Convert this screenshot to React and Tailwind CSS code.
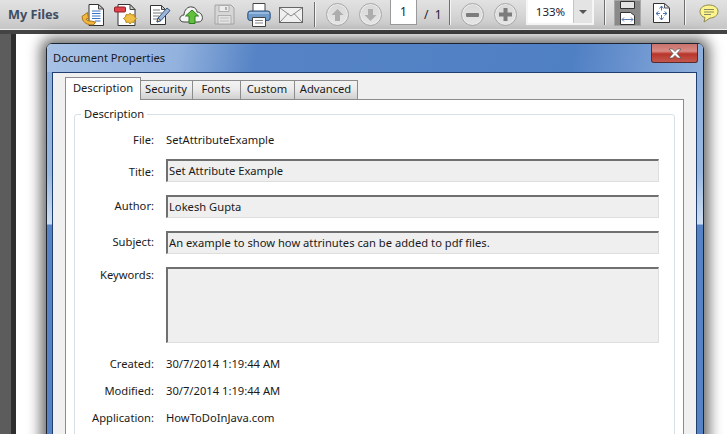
const font = { fontFamily: '"Noto Sans", "Open Sans", sans-serif' };

const Separator = ({ className = "" }) => (
  <div className={`h-[25px] w-px bg-[#6f6f6f] shadow-[1px_0_0_#f4f4f4] ${className}`} />
);

const OpenIcon = () => (
  <svg width="24" height="24" viewBox="0 0 24 24">
    <path d="M8 1.500h9.500l5 4.500v16.500H8z" fill="#fff" stroke="#333" />
    <path d="M17.500 1.500V6h5z" fill="#ccc" stroke="#444" />
    <path d="M11 8h8.500M11 10.500h8.500M11 13h8.500M11 15.500h8.500M14 18h5.500" stroke="#3a74c4" strokeWidth="1.200" />
    <path d="M6.500 9.500 1 13.500 1.800 17c2 4 7.200 5.500 11.200 4.500l1.500-2.500-4.500-1c-2.500.3-4.500-.5-5-2l2.500-.5z" fill="#f4b63c" stroke="#a8741c" />
  </svg>
);

const NewIcon = () => (
  <svg width="24" height="24" viewBox="0 0 24 24">
    <path d="M4 1.500h12l5 5v16H4z" fill="#fff" stroke="#333" />
    <path d="M16 1.500v5h5z" fill="#ccc" stroke="#444" />
    <rect x="0.500" y="4" width="11" height="5" rx="1" fill="#e0424c" stroke="#8f2028" />
    <path d="m16 10 1.500 2 2.500-.5.500 2.500 2 1.500-2 1.500-.5 2.500-2.500-.5-1.500 2-1.500-2-2.500.5-.5-2.500-2-1.500 2-1.500.5-2.500 2.500.5z" fill="#f2bf45" stroke="#b98a1e" />
  </svg>
);

const EditIcon = () => (
  <svg width="22" height="22" viewBox="0 0 22 22">
    <path d="M1.500 1.500h11l4 4v15h-15z" fill="#fff" stroke="#333" />
    <path d="M12.500 1.500v4h4z" fill="#ccc" stroke="#444" />
    <path d="M4 6h7M4 9h9M4 12h6M4 15h4" stroke="#777" />
    <path d="m8 18 1-4 9-10 3 2.500-9 10z" fill="#9db6d8" stroke="#34507a" />
    <path d="m8 18 1-4 3 2.500z" fill="#f0d9a8" stroke="#34507a" />
  </svg>
);

const UploadIcon = () => (
  <svg width="25" height="22" viewBox="0 0 25 22">
    <path d="M5 18c-6 0-5-7 0-7 0-5 4-9 8-8 3 0 5 3 5 5 6 0 8 10 1 10z" fill="#f4f4f4" stroke="#444" />
    <path d="m13 6 6.500 6H16v7.500h-6V12H6.500z" fill="#62c13c" stroke="#2e7d1f" />
  </svg>
);

const SaveIcon = () => (
  <svg width="21" height="21" viewBox="0 0 21 21">
    <path d="M1 1h16l3 3v16H1z" fill="#d6d6d6" stroke="#a4a4a4" />
    <path d="M5 1.500h10v6H5z" fill="#ececec" stroke="#adadad" />
    <path d="M11 3h2v3h-2z" fill="#adadad" />
    <path d="M4 11.500h13V20H4z" fill="#e4e4e4" stroke="#adadad" />
    <path d="M6 14h9M6 17h9" stroke="#bbb" />
  </svg>
);

const PrintIcon = () => (
  <svg width="24" height="24" viewBox="0 0 24 24">
    <path d="M6 .5h12v9H6z" fill="#fff" stroke="#444" />
    <rect x="0.800" y="8" width="22.400" height="9.500" rx="2.500" fill="#6f9ccb" stroke="#2c4f78" />
    <path d="M2 10h20" stroke="#c0d6ee" />
    <path d="M5.500 14.500h13v9h-13z" fill="#fff" stroke="#444" />
    <path d="M8 17.500h8M8 20h8" stroke="#888" />
  </svg>
);

const MailIcon = () => (
  <svg width="24" height="16" viewBox="0 0 24 16">
    <rect x="0.500" y="0.500" width="23" height="15" fill="#f0f0f0" stroke="#666" />
    <path d="m1 1 11 8 11-8M1 15l8-8.500M23 15l-8-8.500" fill="none" stroke="#888" />
  </svg>
);

const RoundButton = ({ children, className = "" }) => (
  <div
    className={`flex h-[23px] w-[23px] items-center justify-center rounded-full border border-[#a8a8a8] bg-[linear-gradient(#d8d8d8,#e6e6e6)] shadow-[inset_0_0_0_1px_#ececec] ${className}`}
  >
    {children}
  </div>
);

const UpArrow = ({ down }) => (
  <svg width="13" height="14" viewBox="0 0 13 14" className={down ? "rotate-180" : ""}>
    <path d="M6.500 1 12.500 7H9v6H4V7H.5z" fill="#adadad" />
  </svg>
);

const FitWidthIcon = () => (
  <svg width="17" height="24" viewBox="0 0 17 24">
    <path d="M1.500.5h14v7h-14z" fill="#e4e4e4" stroke="#333" />
    <path d="M1.500 11.500h10l4 3v9h-14z" fill="#fff" stroke="#333" />
    <path d="M3 18.500h11M3 18.500l2-2M3 18.500l2 2M14 18.500l-2-2M14 18.500l-2 2" stroke="#5f7fb0" fill="none" />
  </svg>
);

const FitPageIcon = () => (
  <svg width="17" height="20" viewBox="0 0 17 20">
    <path d="M.5.5h11l5 4.500v14.500H.5z" fill="#fff" stroke="#333" />
    <path d="M11.500.5V5h5z" fill="#ddd" stroke="#555" />
    <path d="M8.500 3v4.500M8.500 12v5M3 10.500h4M10 10.500h4M8.500 3l-2 2.500M8.500 3l2 2.500M8.500 17l-2-2.500M8.500 17l2-2.500M3 10.500l2.500-2M3 10.500l2.500 2M14 10.500l-2.500-2M14 10.500l-2.500 2" stroke="#4f72aa" fill="none" />
  </svg>
);

const CommentIcon = () => (
  <svg width="20" height="19" viewBox="0 0 20 19">
    <path d="M10 1c5 0 9 2.500 9 6.500S15 14 11 14l-6 4 1-4.500C3 13 1 10.500 1 7.500 1 3.500 5 1 10 1z" fill="#fdf48c" stroke="#8c8a50" />
    <path d="M5 5.500h10M5 8h10M5 10.500h7" stroke="#8a8a60" />
  </svg>
);

const Toolbar = () => (
  <div className="flex h-[29px] items-center overflow-hidden bg-[linear-gradient(#e2e2e2,#d6d6d6_50%,#c6c6c6)] text-[#1c1c34]">
    <span className="ml-[8px] w-[73px] text-[12.700px] font-bold text-[#3f4d63]">My Files</span>
    <OpenIcon />
    <div className="ml-[9px]"><NewIcon /></div>
    <div className="ml-[11px]"><EditIcon /></div>
    <div className="ml-[8px]"><UploadIcon /></div>
    <div className="ml-[10px]"><SaveIcon /></div>
    <div className="ml-[12px]"><PrintIcon /></div>
    <div className="ml-[8px]"><MailIcon /></div>
    <Separator className="ml-[11px]" />
    <RoundButton className="ml-[11px]"><UpArrow /></RoundButton>
    <RoundButton className="ml-[10px]"><UpArrow down /></RoundButton>
    <div className="mb-[4px] ml-[8px] flex h-[25px] w-[27px] items-center justify-center border border-t-0 border-[#9a9a9a] bg-white text-[12px]">1</div>
    <span className="ml-[7px] w-[25px] whitespace-pre text-[12px]">/  1</span>
    <Separator className="mb-[4px]" />
    <RoundButton className="ml-[11px]">
      <div className="h-[4px] w-[13px] rounded-[1px] bg-[#7c7c7c]" />
    </RoundButton>
    <RoundButton className="ml-[10px]">
      <svg width="15" height="15" viewBox="0 0 15 15">
        <path d="M5.500 1h4v4.500H14v4H9.500V14h-4V9.500H1v-4h4.500z" fill="#7c7c7c" />
      </svg>
    </RoundButton>
    <div className="mb-[4px] ml-[9px] flex h-[25px] w-[68px] border-2 border-t-0 border-[#f6f6f6]">
      <div className="flex w-[45px] items-center justify-center bg-white text-[11.500px]">133%</div>
      <div className="flex flex-1 items-center justify-center border-l border-[#c4c4c4] bg-[#e4e4e4]">
        <div className="h-0 w-0 border-x-[4px] border-t-[4px] border-x-transparent border-t-[#555]" />
      </div>
    </div>
    <Separator className="mb-[4px] ml-[10px]" />
    <div className="mb-[3px] ml-[9px] flex h-[26px] w-[27px] items-center justify-center overflow-hidden bg-[#8a8a8a] shadow-[inset_0_0_0_1px_#a8a8a8]">
      <FitWidthIcon />
    </div>
    <div className="mb-[3px] ml-[12px]"><FitPageIcon /></div>
    <Separator className="mb-[4px] ml-[14px]" />
    <div className="mb-[2px] ml-[14px]"><CommentIcon /></div>
  </div>
);

const tabs = [
  { name: "Security", width: "w-[53px]" },
  { name: "Fonts", width: "w-[49px]" },
  { name: "Custom", width: "w-[55px]" },
  { name: "Advanced", width: "w-[64px]" },
];

const Tabs = () => (
  <div className="relative z-10 flex h-[22px] items-end">
    <div className="-mb-px flex h-[23px] w-[76px] items-center justify-center border border-b-0 border-[#8c8c8c] bg-white pb-[2px]">
      Description
    </div>
    {tabs.map((tab) => (
      <div
        key={tab.name}
        className={`-ml-px flex h-[19px] items-center justify-center border border-b-0 border-[#8c8c8c] bg-[linear-gradient(#f3f3f3,#ebebeb_45%,#d0d0d0)] pb-px pr-px ${tab.width}`}
      >
        {tab.name}
      </div>
    ))}
  </div>
);

const Field = ({ height, children }) => (
  <div
    className={`flex items-start border-2 border-r border-b border-[#dedede] border-t-[#707070] border-l-[#707070] bg-[#efefef] pl-[1px] ${height}`}
  >
    <span className="mt-[1px] leading-[17px]">{children}</span>
  </div>
);

const Label = ({ children, className = "" }) => (
  <div className={`text-right leading-[18px] ${className}`}>{children}</div>
);

const Value = ({ children, className = "" }) => (
  <div className={`leading-[18px] ${className}`}>{children}</div>
);

const DescriptionGroup = () => (
  <div className="relative mx-[8px] mt-[13px] h-[340px] rounded-[3px] border border-[#d6e0e6] bg-white">
    <span className="absolute -top-[9px] left-[6px] bg-white px-[3px] leading-[16px]">Description</span>
    <div className="grid grid-cols-[79px_493px] gap-x-[12px] pt-[16px]">
      <Label>File:</Label>
      <Value>SetAttributeExample</Value>

      <Label className="mt-[12px] pt-[2px]">Title:</Label>
      <div className="mt-[10px]"><Field height="h-[23px]">Set Attribute Example</Field></div>

      <Label className="mt-[13px] pt-[2px]">Author:</Label>
      <div className="mt-[13px]"><Field height="h-[23px]">Lokesh Gupta</Field></div>

      <Label className="mt-[13px] pt-[2px]">Subject:</Label>
      <div className="mt-[13px]">
        <Field height="h-[23px]">An example to show how attrinutes can be added to pdf files.</Field>
      </div>

      <Label className="mt-[12px]">Keywords:</Label>
      <div className="mt-[13px]"><Field height="h-[76px]" /></div>

      <Label className="mt-[12px]">Created:</Label>
      <Value className="mt-[12px]">30/7/2014 1:19:44 AM</Value>

      <Label className="mt-[9px]">Modified:</Label>
      <Value className="mt-[9px]">30/7/2014 1:19:44 AM</Value>

      <Label className="mt-[9px]">Application:</Label>
      <Value className="mt-[9px]">HowToDoInJava.com</Value>
    </div>
  </div>
);

const frameGlass =
  "bg-[linear-gradient(#8eb0dc,#98b8e0_100px,#cfdff2_152px,#5583c5_153px)]";

const DialogWindow = () => (
  <div className="flex h-[420px] w-[658px] flex-col overflow-hidden rounded-t-[6px] border border-[#1c2430] shadow-[0_0_14px_5px_rgba(0,0,0,0.6)]">
    <div className="relative h-[28px] shrink-0 bg-[linear-gradient(100deg,#a8c2e6_0,#93b2de_20%,#5583c5_32%,#5080c4_80%,#6e96d0_90%,#8fb0dc_100%)]">
      <span className="absolute left-[6px] top-[5px] leading-[18px] text-[#15181d]">Document Properties</span>
      <div className="absolute right-[5px] top-0 flex h-[19px] w-[47px] items-center justify-center rounded-b-[3px] border border-t-0 border-[#5a2a2a] bg-[linear-gradient(#c9726c,#d98a84_40%,#b8352a_55%,#c4584e)]">
        <svg width="14" height="11" viewBox="0 0 14 11">
          <path d="M1 1h3.500L7 3.600 9.500 1H13L9 5.500l4 4.500H9.500L7 7.400 4.500 10H1l4-4.500z" fill="#fff" stroke="#555" strokeWidth="0.700" />
        </svg>
      </div>
    </div>
    <div className="flex flex-1">
      <div className={`w-[5px] shrink-0 ${frameGlass}`} />
      <div className="flex-1 border border-[#1f3f70] bg-[#f0f0f0] px-[12px] pt-[4px]">
        <Tabs />
        <div className="h-[400px] border border-[#8c8c8c] bg-white pt-px">
          <DescriptionGroup />
        </div>
      </div>
      <div className={`w-[6px] shrink-0 ${frameGlass}`} />
    </div>
  </div>
);

export default function App() {
  return (
    <div className="h-[434px] w-[727px] overflow-hidden bg-white text-[11.200px] text-[#1a1a1a]" style={font}>
      <Toolbar />
      <div className="h-px bg-[#f2f2f2]" />
      <div className="h-[4px] bg-[#444444]" />
      <div className="flex">
        <div className="h-[400px] w-[11px] shrink-0 bg-[#5c5c5c]" />
        <div className="h-[400px] w-[5px] shrink-0 bg-[#2e2e2e]" />
        <div className="flex-1 bg-white pl-[30px] pt-[9px]">
          <DialogWindow />
        </div>
      </div>
    </div>
  );
}
